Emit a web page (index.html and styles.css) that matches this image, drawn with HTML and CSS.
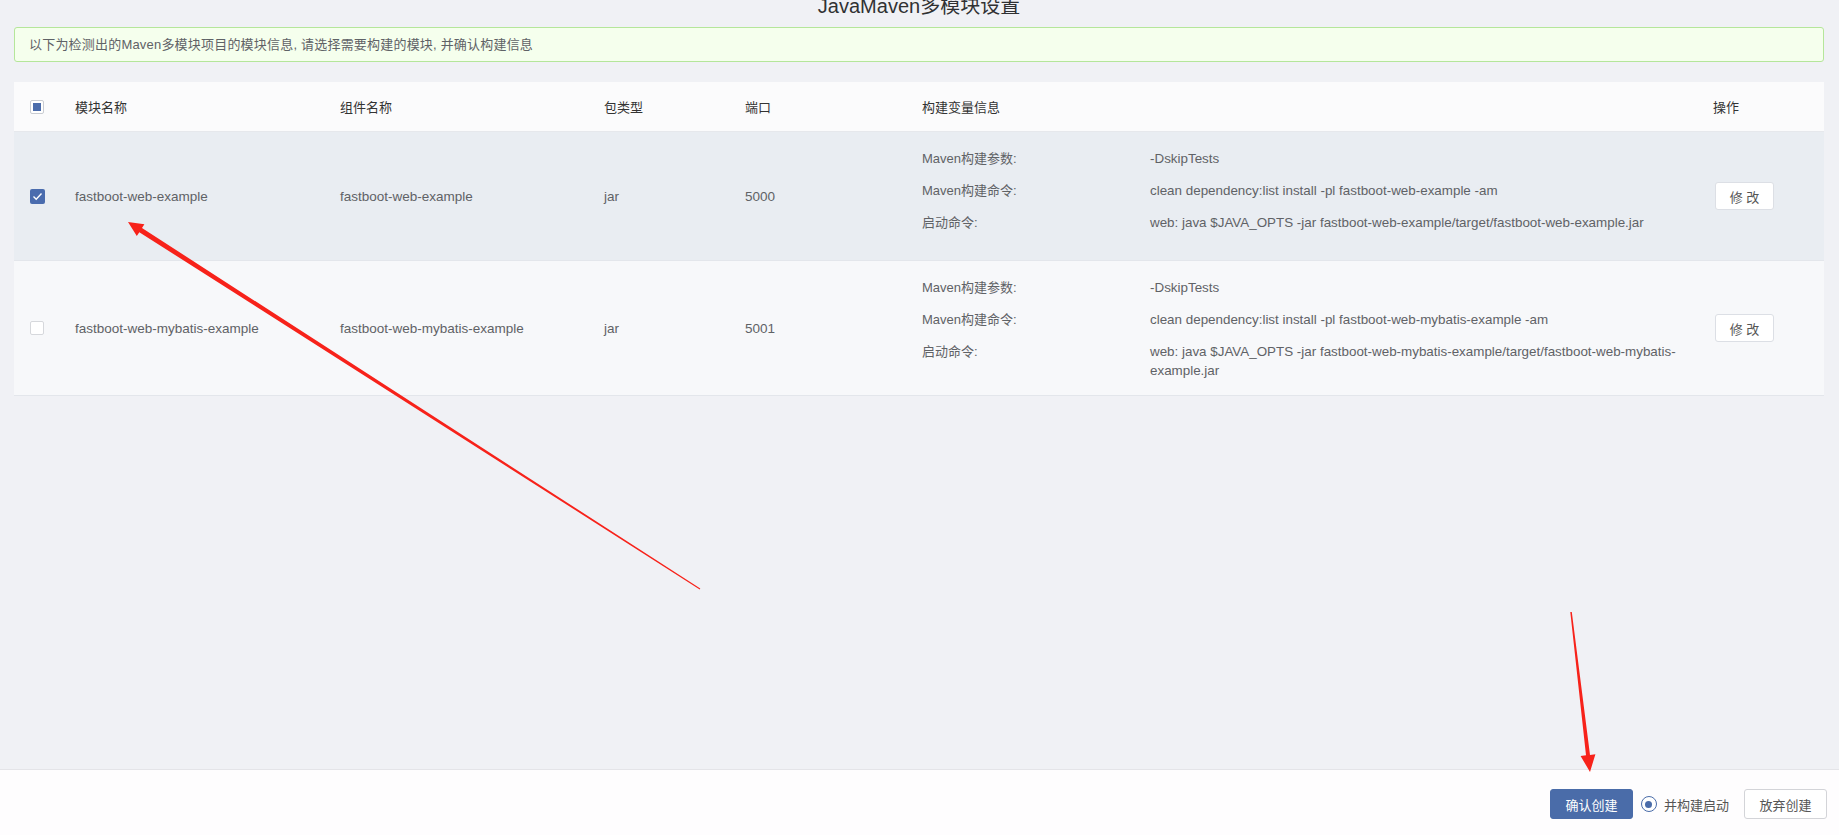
FILE: index.html
```html
<!DOCTYPE html>
<html lang="zh-CN">
<head>
<meta charset="utf-8">
<title>JavaMaven多模块设置</title>
<link rel="stylesheet" href="styles.css">
</head>
<body>
<div class="page">
  <main class="content">
    <h1 class="title">JavaMaven多模块设置</h1>
    <div class="alert">以下为检测出的Maven多模块项目的模块信息, 请选择需要构建的模块, 并确认构建信息</div>
    <table class="modules">
      <colgroup>
        <col class="c-check"><col class="c-name"><col class="c-comp"><col class="c-type"><col class="c-port"><col class="c-info"><col class="c-op">
      </colgroup>
      <thead>
        <tr>
          <th class="check-cell"><span class="cb cb-indeterminate"><span class="cb-dot"></span></span></th>
          <th>模块名称</th>
          <th>组件名称</th>
          <th>包类型</th>
          <th>端口</th>
          <th>构建变量信息</th>
          <th>操作</th>
        </tr>
      </thead>
      <tbody>
        <tr class="row-selected">
          <td class="check-cell"><span class="cb cb-checked"><svg width="11" height="9" viewBox="0 0 11 9"><path d="M1.5 4.6 L4.2 7.2 L9.5 1.6" fill="none" stroke="#fff" stroke-width="1.4"/></svg></span></td>
          <td class="latin">fastboot-web-example</td>
          <td class="latin">fastboot-web-example</td>
          <td class="latin">jar</td>
          <td class="latin">5000</td>
          <td class="info-cell">
            <div class="item"><span class="label">Maven构建参数:</span><span class="value">-DskipTests</span></div>
            <div class="item"><span class="label">Maven构建命令:</span><span class="value">clean dependency:list install -pl fastboot-web-example -am</span></div>
            <div class="item"><span class="label">启动命令:</span><span class="value">web: java $JAVA_OPTS -jar fastboot-web-example/target/fastboot-web-example.jar</span></div>
          </td>
          <td><button class="btn-edit">修 改</button></td>
        </tr>
        <tr class="row-plain">
          <td class="check-cell"><span class="cb"></span></td>
          <td class="latin">fastboot-web-mybatis-example</td>
          <td class="latin">fastboot-web-mybatis-example</td>
          <td class="latin">jar</td>
          <td class="latin">5001</td>
          <td class="info-cell">
            <div class="item"><span class="label">Maven构建参数:</span><span class="value">-DskipTests</span></div>
            <div class="item"><span class="label">Maven构建命令:</span><span class="value">clean dependency:list install -pl fastboot-web-mybatis-example -am</span></div>
            <div class="item"><span class="label">启动命令:</span><span class="value">web: java $JAVA_OPTS -jar fastboot-web-mybatis-example/target/fastboot-web-mybatis-example.jar</span></div>
          </td>
          <td><button class="btn-edit">修 改</button></td>
        </tr>
      </tbody>
    </table>
  </main>
  <footer class="footer">
    <button class="btn btn-primary">确认创建</button>
    <label class="radio"><span class="radio-circle"><span class="radio-dot"></span></span><span class="radio-text">并构建启动</span></label>
    <button class="btn btn-default">放弃创建</button>
  </footer>
  <svg class="annotations" width="1839" height="835" viewBox="0 0 1839 835">
    <polygon fill="#f7221a" points="700.3,588.6 142.0,228.0 144.4,224.2 128,222 136.8,236 139.3,232.2 699.7,589.4"/>
    <polygon fill="#f7221a" points="1570.3,612.1 1586.0,755.3 1580.6,756.0 1590,772 1595.4,754.2 1590.0,755.0 1571.8,611.9"/>
  </svg>
</div>
</body>
</html>
```

FILE: styles.css
```css
html, body {
  margin: 0;
  padding: 0;
}

body {
  background: #f0f1f5;
  font-family: "Liberation Sans", "Noto Sans CJK SC", sans-serif;
  font-size: 13px;
  color: #606266;
  overflow: hidden;
}

.page {
  position: relative;
  height: 835px;
  display: flex;
  flex-direction: column;
}

.content {
  flex: 1;
  padding: 0 15px 0 14px;
}

.title {
  margin: -8px 0 7px;
  font-size: 20px;
  line-height: 28px;
  font-weight: normal;
  color: #303133;
  text-align: center;
}

.alert {
  box-sizing: border-box;
  height: 35px;
  line-height: 33px;
  padding: 0 14px;
  background: #f5ffed;
  border: 1px solid #b5e69a;
  border-radius: 3px;
  color: #5f6266;
  letter-spacing: 0.2px;
}

.modules {
  margin-top: 20px;
  width: 100%;
  table-layout: fixed;
  border-collapse: collapse;
}

.c-check { width: 61px; }
.c-name { width: 265px; }
.c-comp { width: 264px; }
.c-type { width: 141px; }
.c-port { width: 177px; }
.c-info { width: 791px; }
.c-op { width: auto; }

.modules th {
  height: 49px;
  padding: 0;
  background: #fbfbfc;
  border-bottom: 1px solid #e6e8ec;
  text-align: left;
  font-weight: normal;
  color: #333;
}

.modules td {
  padding: 0;
  vertical-align: middle;
  border-bottom: 1px solid #e3e6eb;
  color: #5f6266;
}

.modules td.latin {
  font-size: 13.5px;
}

.modules .check-cell {
  padding-left: 16px;
}

.row-selected td {
  background: #e9edf2;
}

.row-plain td {
  background: #f7f8fa;
}

.modules td.info-cell {
  padding: 17px 22px 15px 0;
}

.item {
  display: flex;
  align-items: flex-start;
  min-height: 32px;
  line-height: 19px;
}

.label {
  flex: 0 0 228px;
}

.value {
  flex: 1;
  min-width: 0;
  font-size: 13.4px;
}

.cb {
  box-sizing: border-box;
  display: flex;
  align-items: center;
  justify-content: center;
  width: 14px;
  height: 14px;
  background: #fff;
  border: 1px solid #d6d8dc;
  border-radius: 2px;
}

.cb-indeterminate {
  border-color: #c9ccd2;
}

.cb-dot {
  width: 8px;
  height: 8px;
  background: #4b6cab;
}

.cb-checked {
  width: 15px;
  height: 15px;
  border: none;
  background: #4a6cae;
}

.btn-edit {
  box-sizing: border-box;
  width: 59px;
  height: 28px;
  margin-left: 2px;
  padding: 0;
  background: #fff;
  border: 1px solid #dcdfe5;
  border-radius: 3px;
  font-family: inherit;
  font-size: 13px;
  color: #555;
}

.footer {
  height: 66px;
  box-sizing: border-box;
  padding: 19px 12px 0 0;
  background: #fefdfe;
  border-top: 1px solid #e4e4e8;
  display: flex;
  align-items: flex-start;
  justify-content: flex-end;
}

.btn {
  box-sizing: border-box;
  height: 30px;
  width: 83px;
  padding: 0;
  border-radius: 3px;
  font-family: inherit;
  font-size: 13px;
}

.btn-primary {
  background: #4a6ca9;
  border: 1px solid #4a6ca9;
  color: #fff;
}

.btn-default {
  background: #fff;
  border: 1px solid #d3d4d8;
  color: #555;
  margin-left: 15px;
}

.radio {
  display: flex;
  align-items: center;
  height: 30px;
  margin-left: 8px;
}

.radio-circle {
  box-sizing: border-box;
  width: 16px;
  height: 16px;
  border: 1.5px solid #4a6ca9;
  border-radius: 50%;
  display: flex;
  align-items: center;
  justify-content: center;
  background: #fff;
}

.radio-dot {
  width: 7px;
  height: 7px;
  border-radius: 50%;
  background: #4a6ca9;
}

.radio-text {
  margin-left: 7px;
  color: #555;
}

.annotations {
  position: absolute;
  left: 0;
  top: 0;
  pointer-events: none;
}
```
